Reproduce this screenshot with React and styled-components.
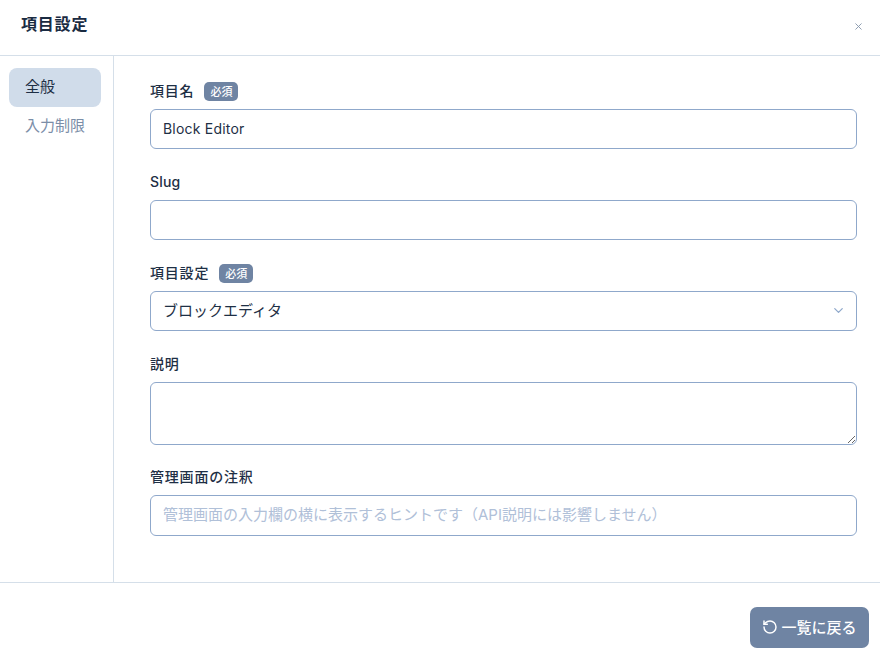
import React from "react";
import styled, { createGlobalStyle } from "styled-components";
import { ChevronDown, RotateCcw, X } from "lucide-react";

const Global = createGlobalStyle`
  html, body {
    margin: 0;
    padding: 0;
    background: #fff;
  }
  * {
    box-sizing: border-box;
  }
  body {
    font-family: Inter, "Noto Sans CJK JP", sans-serif;
    color: #1e2f45;
    letter-spacing: 0.05em;
  }
`;

const Dialog = styled.div`
  width: 880px;
  height: 657px;
  display: flex;
  flex-direction: column;
  background: #fff;
`;

const Header = styled.header`
  height: 56px;
  flex: 0 0 56px;
  display: flex;
  align-items: center;
  justify-content: space-between;
  padding: 0 17px 8px 21px;
  border-bottom: 1px solid #d5dfe9;
`;

const Title = styled.h1`
  margin: 0;
  font-size: 16px;
  font-weight: 700;
  line-height: 24px;
  color: #1a2b42;
`;

const CloseButton = styled.button`
  display: flex;
  padding: 0;
  border: none;
  background: none;
  color: #8796ab;
  margin: 6px -1px 0 0;
`;

const Body = styled.div`
  flex: 0 0 526px;
  display: flex;
`;

const Side = styled.nav`
  width: 114px;
  flex: 0 0 114px;
  padding: 12px 12px 0 9px;
  border-right: 1px solid #d5dfe9;
  display: flex;
  flex-direction: column;
`;

const SideItem = styled.a`
  height: 39px;
  display: flex;
  align-items: center;
  padding: 0 16px 4px;
  border-radius: 8px;
  font-size: 15px;
  letter-spacing: 0;
  background: ${(props) => (props.$active ? "#d0dcea" : "transparent")};
  color: ${(props) => (props.$active ? "#1e2f45" : "#7b8ea8")};
`;

const Form = styled.form`
  flex: 1;
  padding: 25px 23px 0 36px;
  display: flex;
  flex-direction: column;
  gap: 23px;
`;

const Field = styled.div`
  display: flex;
  flex-direction: column;
  gap: 8px;
`;

const LabelRow = styled.div`
  height: 20px;
  display: flex;
  align-items: center;
  gap: 10px;
`;

const Label = styled.label`
  font-size: 14px;
  font-weight: 500;
  line-height: 20px;
  color: #1e2f45;
  letter-spacing: ${(props) => (props.$latin ? "0.2px" : "inherit")};
`;

const Badge = styled.span`
  height: 19px;
  padding: 0 6px;
  display: flex;
  align-items: center;
  border-radius: 5px;
  background: #6f84a3;
  color: #fff;
  font-size: 11px;
  font-weight: 500;
  letter-spacing: 0;
`;

const controlStyles = `
  width: 100%;
  border: 1px solid #8fa8cb;
  border-radius: 6px;
  background: #fff;
  padding: 0 12px;
  font-family: inherit;
  font-size: 14px;
  color: #1e2f45;
  outline: none;
`;

const Input = styled.input`
  ${controlStyles}
  height: ${(props) => (props.$tall ? "41px" : "40px")};
  padding-bottom: 2px;
  letter-spacing: 0.2px;

  &::placeholder {
    color: #b0c0d8;
    opacity: 1;
    font-size: 15px;
    letter-spacing: 0;
  }
`;

const SelectWrap = styled.div`
  position: relative;
`;

const Select = styled.select`
  ${controlStyles}
  height: 40px;
  padding-bottom: 2px;
  font-size: 15px;
  letter-spacing: 0;
  appearance: none;
`;

const SelectIcon = styled(ChevronDown)`
  position: absolute;
  right: 11px;
  top: 12px;
  color: #8fa8cb;
  pointer-events: none;
`;

const Textarea = styled.textarea`
  ${controlStyles}
  height: 63px;
  margin-bottom: -1px;
  padding-top: 8px;
  display: block;
`;

const Footer = styled.footer`
  flex: 1;
  display: flex;
  justify-content: flex-end;
  align-items: flex-start;
  padding: 24px 11px 0 0;
  border-top: 1px solid #d5dfe9;
`;

const BackButton = styled.button`
  width: 119px;
  height: 41px;
  display: flex;
  align-items: center;
  justify-content: center;
  gap: 3px;
  padding: 0 0 2px;
  border: none;
  border-radius: 7px;
  background: #6f84a3;
  color: #fff;
  font-family: inherit;
  font-size: 15px;
  font-weight: 500;
  letter-spacing: 0;
`;

export default function App() {
  return (
    <Dialog>
      <Global />
      <Header>
        <Title>項目設定</Title>
        <CloseButton type="button" aria-label="閉じる">
          <X size={11} />
        </CloseButton>
      </Header>
      <Body>
        <Side>
          <SideItem $active>全般</SideItem>
          <SideItem>入力制限</SideItem>
        </Side>
        <Form>
          <Field>
            <LabelRow>
              <Label>項目名</Label>
              <Badge>必須</Badge>
            </LabelRow>
            <Input defaultValue="Block Editor" />
          </Field>
          <Field>
            <LabelRow>
              <Label $latin>Slug</Label>
            </LabelRow>
            <Input />
          </Field>
          <Field>
            <LabelRow>
              <Label>項目設定</Label>
              <Badge>必須</Badge>
            </LabelRow>
            <SelectWrap>
              <Select defaultValue="block">
                <option value="block">ブロックエディタ</option>
              </Select>
              <SelectIcon size={15} />
            </SelectWrap>
          </Field>
          <Field>
            <LabelRow>
              <Label>説明</Label>
            </LabelRow>
            <Textarea />
          </Field>
          <Field>
            <LabelRow>
              <Label>管理画面の注釈</Label>
            </LabelRow>
            <Input $tall placeholder="管理画面の入力欄の横に表示するヒントです（API説明には影響しません）" />
          </Field>
        </Form>
      </Body>
      <Footer>
        <BackButton type="button">
          <RotateCcw size={16} strokeWidth={2.2} />
          一覧に戻る
        </BackButton>
      </Footer>
    </Dialog>
  );
}
